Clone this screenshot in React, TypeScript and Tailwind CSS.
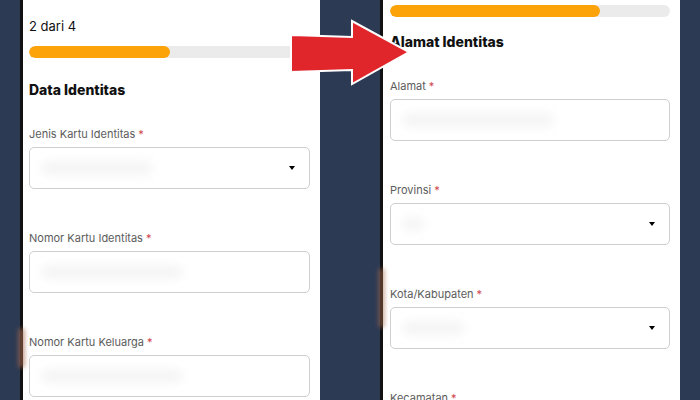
import React from "react";

type FieldProps = { label: string; select?: boolean; first?: boolean; blur?: number };

function Field({ label, select, first, blur = 130 }: FieldProps) {
  return (
    <div className={first ? "mt-[24px]" : "mt-[41px]"}>
      <p className="text-[11px] leading-4 text-[#5c5c5c]">
        {label}
        <span className="ml-[3px] text-[#d0454c]">*</span>
      </p>
      <div className="mt-[5px] h-[42px] rounded-[5px] border border-[#cfcfcf] bg-white flex items-center px-3">
        <div className="h-[14px] rounded bg-[#f5f5f5] blur-[5px]" style={{ width: blur }} />
        <div className="flex-1" />
        {select && (
          <div className="w-0 h-0 border-l-[3px] border-r-[3px] border-t-[4px] border-l-transparent border-r-transparent border-t-black mr-[2px]" />
        )}
      </div>
    </div>
  );
}

function Progress({ pct }: { pct: string }) {
  return (
    <div className="h-[12px] w-full rounded-full bg-[#ebebeb] overflow-hidden">
      <div className={`h-full rounded-full bg-[#fca30a] ${pct}`} />
    </div>
  );
}

export default function App() {
  return (
    <div
      className="relative w-[700px] h-[400px] overflow-hidden bg-[#2d3a54] flex gap-[60px] px-[20px]"
      style={{ fontFamily: "Inter, 'Noto Sans', sans-serif" }}
    >
      {/* left phone */}
      <div className="w-[300px] h-full bg-white border-l-[3px] border-[#111] pl-[6px] pr-[10px] pt-[16px]">
        <p className="text-[13px] leading-5 text-[#111]">2 dari 4</p>
        <div className="mt-[10px]">
          <Progress pct="w-[50%]" />
        </div>
        <h2 className="mt-[20px] text-[14px] leading-6 font-extrabold text-[#111]">Data Identitas</h2>
        <Field label="Jenis Kartu Identitas" select first blur={110} />
        <Field label="Nomor Kartu Identitas" blur={140} />
        <Field label="Nomor Kartu Keluarga" blur={140} />
      </div>

      {/* right phone */}
      <div className="w-[300px] h-full bg-white border-l-[3px] border-[#111] pl-[7px] pr-[10px] pt-[5px]">
        <Progress pct="w-[75%]" />
        <h2 className="mt-[13px] text-[14px] leading-6 font-extrabold text-[#111]">Alamat Identitas</h2>
        <Field label="Alamat" first blur={150} />
        <Field label="Provinsi" select blur={20} />
        <Field label="Kota/Kabupaten" select blur={60} />
        <Field label="Kecamatan" blur={60} />
      </div>

      {/* finger smudges on the phone edges */}
      <div className="absolute left-[18px] top-[328px] w-[7px] h-[40px] rounded-full bg-[#a5694c]/60 blur-[2px]" />
      <div className="absolute left-[378px] top-[268px] w-[7px] h-[60px] rounded-full bg-[#a5694c]/50 blur-[2px]" />

      {/* red arrow */}
      <svg className="absolute left-0 top-0" width="700" height="400" viewBox="0 0 700 400">
        <polygon
          points="291,35 352,37 352,21 409,52 352,84 352,70 291,72"
          fill="#e1262b"
          stroke="#ffffff"
          strokeWidth="2"
          strokeLinejoin="miter"
        />
      </svg>
    </div>
  );
}
